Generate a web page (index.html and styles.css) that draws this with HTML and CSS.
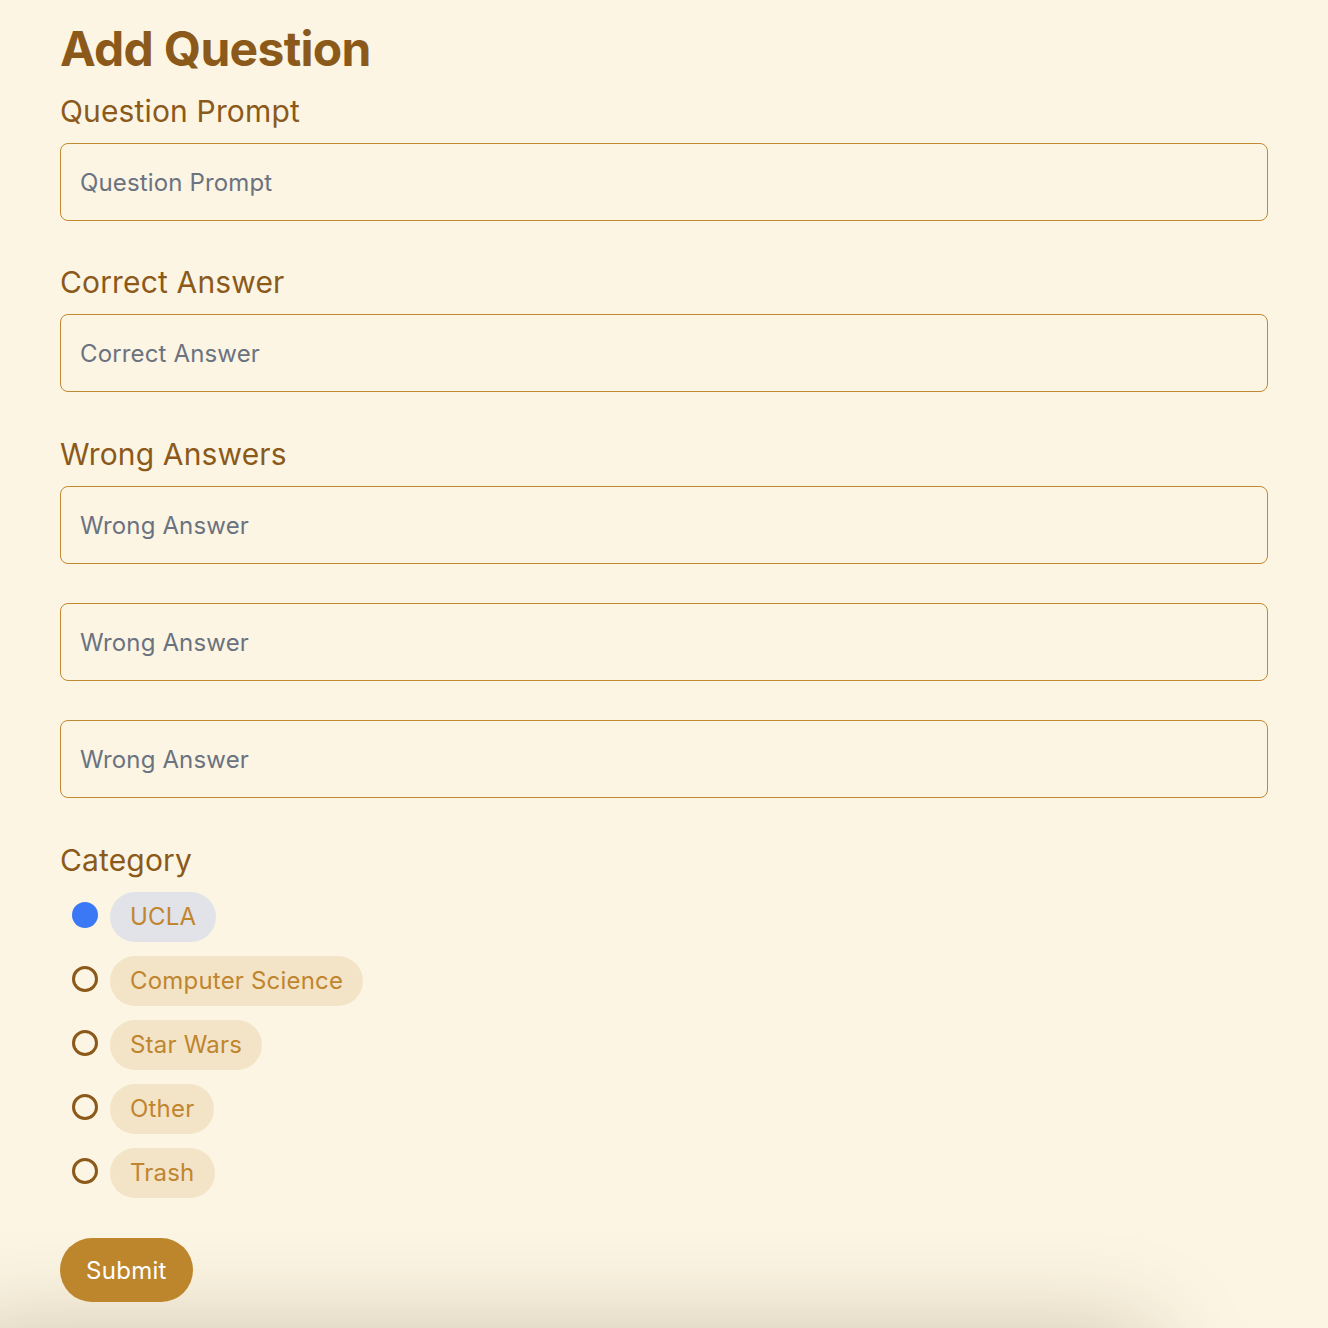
FILE: index.html
```html
<!DOCTYPE html>
<html lang="en">
<head>
<meta charset="utf-8">
<title>Add Question</title>
<link rel="stylesheet" href="styles.css">
</head>
<body>
<main class="page">
  <form class="form">
    <h1 class="title">Add Question</h1>

    <div class="group">
      <label class="label" for="prompt">Question Prompt</label>
      <input class="field" id="prompt" type="text" placeholder="Question Prompt">
    </div>

    <div class="group">
      <label class="label" for="correct">Correct Answer</label>
      <input class="field" id="correct" type="text" placeholder="Correct Answer">
    </div>

    <div class="group">
      <label class="label" for="wrong1">Wrong Answers</label>
      <div class="stack">
        <input class="field" id="wrong1" type="text" placeholder="Wrong Answer">
        <input class="field" type="text" placeholder="Wrong Answer">
        <input class="field" type="text" placeholder="Wrong Answer">
      </div>
    </div>

    <div class="group">
      <span class="label">Category</span>
      <div class="options">
        <label class="option">
          <input class="radio" type="radio" name="category" checked>
          <span class="pill">UCLA</span>
        </label>
        <label class="option">
          <input class="radio" type="radio" name="category">
          <span class="pill">Computer Science</span>
        </label>
        <label class="option">
          <input class="radio" type="radio" name="category">
          <span class="pill">Star Wars</span>
        </label>
        <label class="option">
          <input class="radio" type="radio" name="category">
          <span class="pill">Other</span>
        </label>
        <label class="option">
          <input class="radio" type="radio" name="category">
          <span class="pill">Trash</span>
        </label>
      </div>
    </div>

    <button class="submit" type="button">Submit</button>
  </form>
  <div class="below"></div>
</main>
</body>
</html>
```

FILE: styles.css
```css
html, body {
  margin: 0;
  padding: 0;
  background: #fcf5e3;
}

body {
  font-family: Inter, "Noto Sans", "Liberation Sans", sans-serif;
  color: #8b5a1b;
  overflow: hidden;
  height: 1328px;
}

.page {
  padding: 25px 60px 0;
}

.form {
  display: flex;
  flex-direction: column;
}

.title {
  margin: 0 0 20px;
  font-size: 48px;
  line-height: 48px;
  font-weight: 700;
  letter-spacing: -0.7px;
  color: #8b5a1b;
}

.group {
  display: flex;
  flex-direction: column;
  gap: 14px;
  margin-bottom: 44px;
}

.title + .group {
  margin-bottom: 43px;
}

.label {
  font-size: 30px;
  line-height: 36px;
  font-weight: 400;
  letter-spacing: 0.15px;
  color: #8b5a1b;
}

.stack {
  display: flex;
  flex-direction: column;
  gap: 39px;
}

.field {
  box-sizing: border-box;
  width: 100%;
  height: 78px;
  margin: 0;
  padding: 0 19px;
  border: 1px solid #c18a33;
  border-radius: 8px;
  background: #fcf5e3;
  font-family: inherit;
  font-size: 24px;
  letter-spacing: 0.15px;
  color: #374151;
  outline: none;
}

.field::placeholder {
  color: #6b7280;
}

.options {
  display: flex;
  flex-direction: column;
  gap: 14px;
  margin-top: 0;
  margin-bottom: -4px;
}

.option {
  display: flex;
  align-items: flex-start;
  gap: 12px;
  padding-left: 12px;
  cursor: pointer;
}

.radio {
  appearance: none;
  -webkit-appearance: none;
  box-sizing: border-box;
  width: 26px;
  height: 26px;
  margin: 10px 0 0;
  border: 3px solid #8b5a1b;
  border-radius: 50%;
  background: transparent;
  flex: none;
}

.radio:checked {
  border: none;
  background: #3b78f6;
}

.pill {
  display: inline-block;
  height: 50px;
  line-height: 50px;
  padding: 0 20px;
  border-radius: 25px;
  background: #f3e4c8;
  color: #c0852f;
  font-size: 24px;
  letter-spacing: 0.2px;
}

.radio:checked + .pill {
  background: #e2e3e8;
}

.submit {
  align-self: flex-start;
  height: 64px;
  padding: 0 26px;
  margin: 0;
  border: none;
  border-radius: 32px;
  background: #be862c;
  color: #ffffff;
  font-family: inherit;
  font-size: 24px;
  letter-spacing: 0.3px;
  cursor: pointer;
}

.below {
  width: 1190px;
  height: 200px;
  margin: 34px 0 0 -100px;
  background: #fcf5e3;
  box-shadow: 0 0 100px rgba(70, 50, 10, 0.28);
}
```
